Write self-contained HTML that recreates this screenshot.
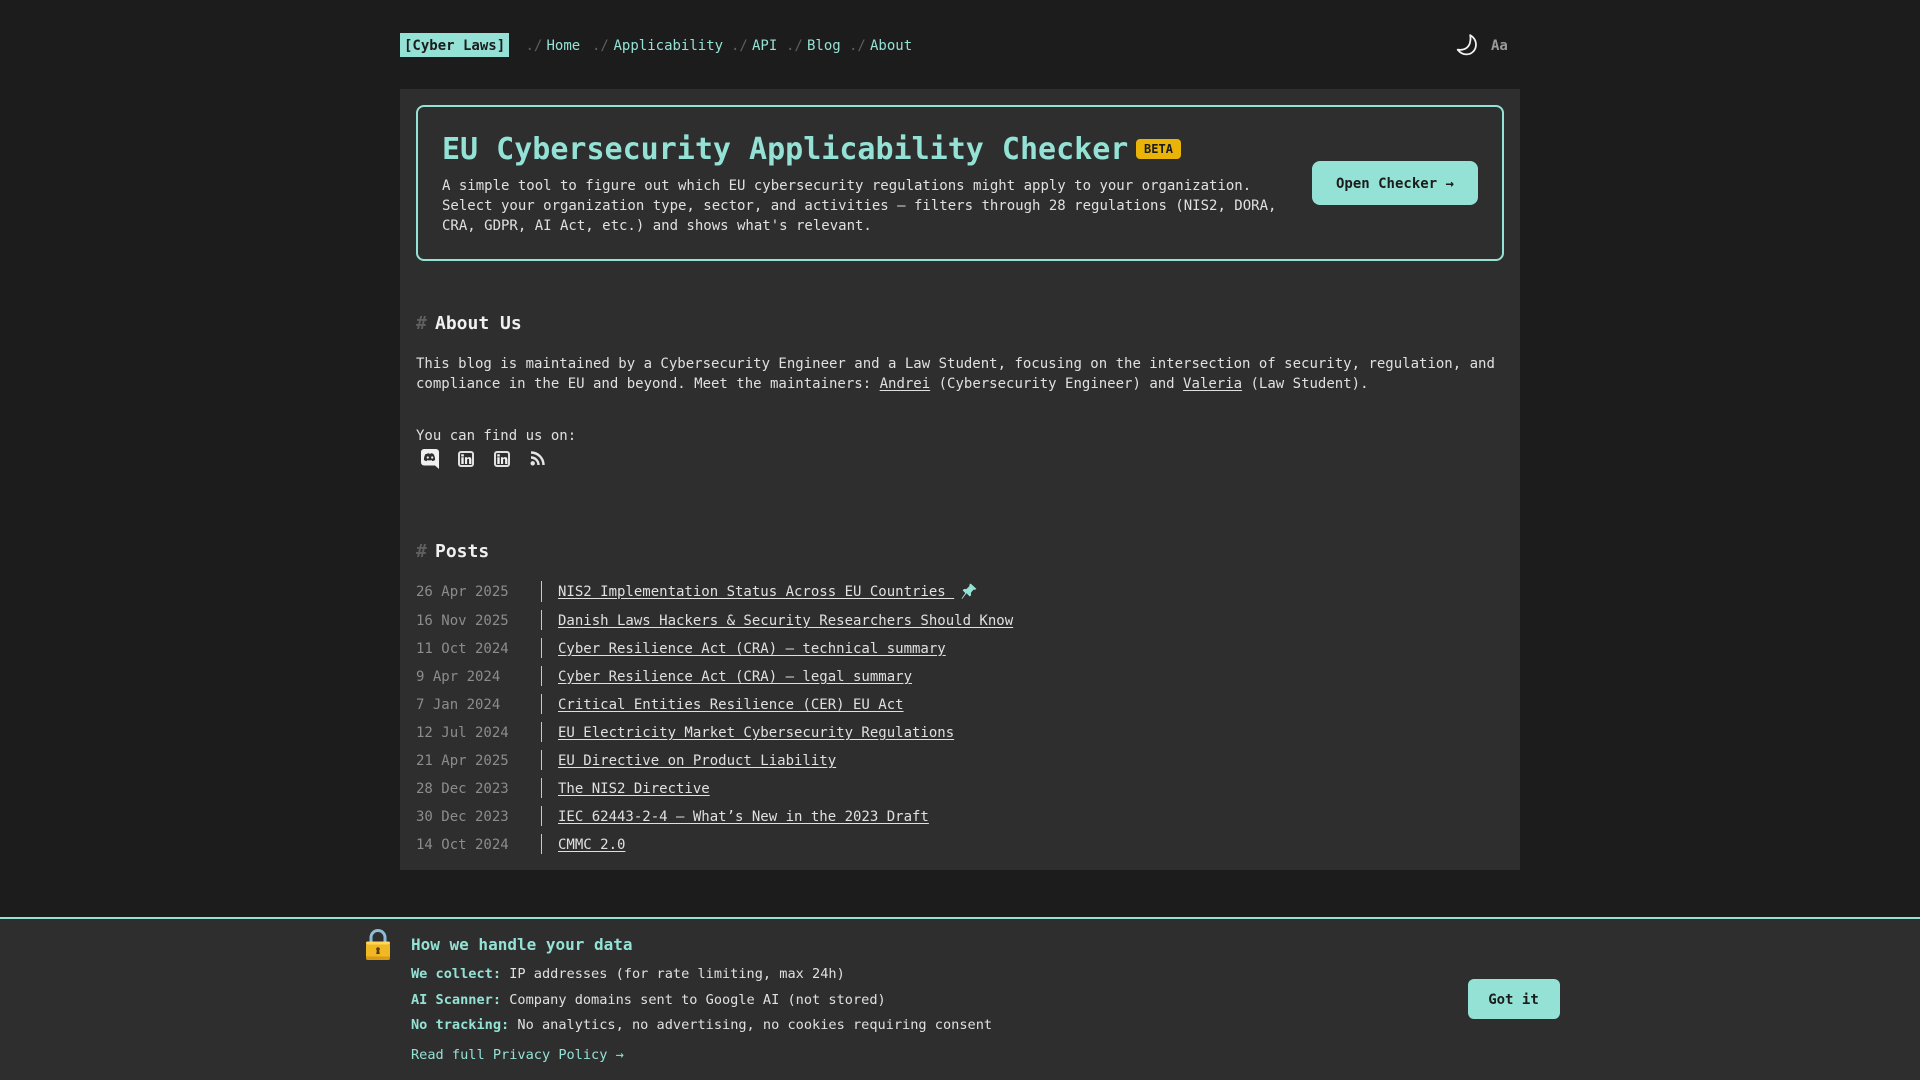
<!DOCTYPE html>
<html lang="en"><head><meta charset="utf-8"><title>Cyber Laws</title>
<style>
html,body{margin:0;padding:0;width:1920px;height:1080px;overflow:hidden;background:#1c1c1c}
body{position:relative;font-family:"DejaVu Sans Mono",monospace;font-size:14px;line-height:20px;color:#e0e0e0}
.t,.b{position:absolute;white-space:pre;line-height:20px}
.g{color:#5f5f5f}.c{color:#94e2d5}.d{color:#8c8c8c}
b,.bd{font-weight:700}
a{color:inherit;text-decoration:underline;text-underline-offset:2px}
.s{position:absolute;left:541px;width:1px;background:#94e2d5}
svg{position:absolute;display:block}
</style></head><body>
<div class="b" style="left:400px;top:33px;width:109px;height:24px;background:#94e2d5"></div>
<div class="t bd" style="left:404px;top:36px;color:#1c1c1c">[Cyber Laws]</div>
<div class="t g" style="left:525.500px;top:36px">./</div><div class="t c" style="left:546.500px;top:36px">Home</div>
<div class="t g" style="left:592px;top:36px">./</div><div class="t c" style="left:613.500px;top:36px">Applicability</div>
<div class="t g" style="left:731px;top:36px">./</div><div class="t c" style="left:752px;top:36px">API</div>
<div class="t g" style="left:786px;top:36px">./</div><div class="t c" style="left:807px;top:36px">Blog</div>
<div class="t g" style="left:849px;top:36px">./</div><div class="t c" style="left:870px;top:36px">About</div>
<svg style="left:1454px;top:33px" width="25" height="25" viewBox="0 0 24 24" fill="none" stroke="#f2f2f2" stroke-width="1.700" stroke-linejoin="round"><path d="M15.500 2c3.800 2.300 6 6 5.500 10.500-.5 4.600-4.500 8-9 8-3 0-6-1.300-8.500-4.500 5.500.8 9.500-1 11.500-5.500.9-3 1.200-5.700.5-8.500z"/></svg>
<div class="t bd" style="left:1491px;top:36px;font-size:14px;color:#9a9a9a">Aa</div>

<div class="b" style="left:400px;top:89px;width:1120px;height:781px;background:#2e2e2e"></div>
<div class="b" style="left:416px;top:105px;width:1084px;height:152px;border:2px solid #94e2d5;border-radius:8px"></div>
<div class="t bd c" style="left:442px;top:140px;font-size:30px;line-height:20px">EU Cybersecurity Applicability Checker</div>
<div class="b bd" style="left:1136px;top:139px;width:45px;height:20px;background:#eab308;border-radius:4px;color:#1c1c1c;font-size:12px;text-align:center">BETA</div>
<div class="t" style="left:442px;top:176px">A simple tool to figure out which EU cybersecurity regulations might apply to your organization.</div>
<div class="t" style="left:442px;top:196px">Select your organization type, sector, and activities — filters through 28 regulations (NIS2, DORA,</div>
<div class="t" style="left:442px;top:216px">CRA, GDPR, AI Act, etc.) and shows what's relevant.</div>
<div class="b bd" style="left:1312px;top:161px;width:166px;height:44px;line-height:46px;background:#94e2d5;border-radius:8px;color:#1c1c1c;text-align:center">Open Checker →</div>

<div class="t bd g" style="left:416px;top:314px;font-size:18px">#</div>
<div class="t bd" style="left:435px;top:314px;font-size:18px;color:#f0f0f0">About Us</div>
<div class="t" style="left:416px;top:354px">This blog is maintained by a Cybersecurity Engineer and a Law Student, focusing on the intersection of security, regulation, and</div>
<div class="t" style="left:416px;top:374px">compliance in the EU and beyond. Meet the maintainers: <a>Andrei</a> (Cybersecurity Engineer) and <a>Valeria</a> (Law Student).</div>
<div class="t" style="left:416px;top:426px">You can find us on:</div>

<svg style="left:421px;top:449px" width="18" height="20" viewBox="0 0 18 20"><path fill="#f0f0f0" d="M3 0h12a3 3 0 0 1 3 3v17l-4-3.500H3a3 3 0 0 1-3-3V3a3 3 0 0 1 3-3z"/><path fill="#2e2e2e" d="M5.500 5c1-.5 2-.7 2.500-.7l.3.500h1.400l.3-.5c.5 0 1.500.2 2.500.7 1.200 2 1.700 4 1.500 6-1 .7-2 1-2.700 1.100l-.6-1c-1.500.4-3 .4-4.400 0l-.6 1c-.7-.1-1.700-.4-2.700-1.100-.2-2 .3-4 1.500-6z"/><circle cx="6.800" cy="8.500" r="1.100" fill="#f0f0f0"/><circle cx="11.200" cy="8.500" r="1.100" fill="#f0f0f0"/></svg>
<svg style="left:458px;top:451px" width="16" height="16" viewBox="0 0 16 16"><rect x="1" y="1" width="14" height="14" rx="2" fill="none" stroke="#e0e0e0" stroke-width="2"/><path fill="#f0f0f0" d="M3.300 6.300h2.400v6.700H3.300zM3.200 3.300h2.600v2.200H3.200zM7 6.300h2.100v.9c.4-.7 1.100-1.100 2-1.100 1.700 0 2.300 1 2.300 2.600v4.300h-2.300V9c0-.8-.2-1.300-.9-1.300-.8 0-1.100.6-1.100 1.400V13H7z"/></svg>
<svg style="left:494px;top:451px" width="16" height="16" viewBox="0 0 16 16"><rect x="1" y="1" width="14" height="14" rx="2" fill="none" stroke="#e0e0e0" stroke-width="2"/><path fill="#f0f0f0" d="M3.300 6.300h2.400v6.700H3.300zM3.200 3.300h2.600v2.200H3.200zM7 6.300h2.100v.9c.4-.7 1.100-1.100 2-1.100 1.700 0 2.300 1 2.300 2.600v4.300h-2.300V9c0-.8-.2-1.300-.9-1.300-.8 0-1.100.6-1.100 1.400V13H7z"/></svg>
<svg style="left:530px;top:451px" width="15" height="15" viewBox="0 0 15 15" fill="none" stroke="#e6e6e6" stroke-width="2.400"><circle cx="2.700" cy="12.300" r="2.200" fill="#e6e6e6" stroke="none"/><path d="M1 6.500a7.500 7.500 0 0 1 7.500 7.500M1 1.500A12.500 12.500 0 0 1 13.500 14"/></svg>

<div class="t bd g" style="left:416px;top:542px;font-size:18px">#</div>
<div class="t bd" style="left:435px;top:542px;font-size:18px;color:#f0f0f0">Posts</div>

<div class="t d" style="left:416px;top:582px">26 Apr 2025</div><div class="s" style="top:581px;height:21px"></div><div class="t" style="left:558px;top:582px"><a>NIS2 Implementation Status Across EU Countries </a></div>
<svg style="left:961px;top:583px" width="16" height="17" viewBox="0 0 15 16"><path fill="#94e2d5" d="M9 .5l5.500 5-1.500 1-1.200-.3-2.500 3 .2 2.300-1.300 1.200-3-3L1 15l-.5-.5L4 9.500 1.500 6.800l1.300-1.200 2.300.1 2.800-2.800-.1-1.200z"/></svg>
<div class="t d" style="left:416px;top:611px">16 Nov 2025</div><div class="s" style="top:610px;height:20px"></div><div class="t" style="left:558px;top:611px"><a>Danish Laws Hackers &amp; Security Researchers Should Know</a></div>
<div class="t d" style="left:416px;top:639px">11 Oct 2024</div><div class="s" style="top:638px;height:20px"></div><div class="t" style="left:558px;top:639px"><a>Cyber Resilience Act (CRA) — technical summary</a></div>
<div class="t d" style="left:416px;top:667px">9 Apr 2024</div><div class="s" style="top:666px;height:20px"></div><div class="t" style="left:558px;top:667px"><a>Cyber Resilience Act (CRA) — legal summary</a></div>
<div class="t d" style="left:416px;top:695px">7 Jan 2024</div><div class="s" style="top:694px;height:20px"></div><div class="t" style="left:558px;top:695px"><a>Critical Entities Resilience (CER) EU Act</a></div>
<div class="t d" style="left:416px;top:723px">12 Jul 2024</div><div class="s" style="top:722px;height:20px"></div><div class="t" style="left:558px;top:723px"><a>EU Electricity Market Cybersecurity Regulations</a></div>
<div class="t d" style="left:416px;top:751px">21 Apr 2025</div><div class="s" style="top:750px;height:20px"></div><div class="t" style="left:558px;top:751px"><a>EU Directive on Product Liability</a></div>
<div class="t d" style="left:416px;top:779px">28 Dec 2023</div><div class="s" style="top:778px;height:20px"></div><div class="t" style="left:558px;top:779px"><a>The NIS2 Directive</a></div>
<div class="t d" style="left:416px;top:807px">30 Dec 2023</div><div class="s" style="top:806px;height:20px"></div><div class="t" style="left:558px;top:807px"><a>IEC 62443-2-4 — What’s New in the 2023 Draft</a></div>
<div class="t d" style="left:416px;top:835px">14 Oct 2024</div><div class="s" style="top:834px;height:20px"></div><div class="t" style="left:558px;top:835px"><a>CMMC 2.0</a></div>

<div class="b" style="left:0;top:917px;width:1920px;height:161px;border-top:2px solid #94e2d5;background:#2e2e2e"></div>
<svg style="left:363px;top:928px" width="30" height="33" viewBox="0 0 30 33"><path d="M8 15V9.500a7 7 0 0 1 14 0V15" fill="none" stroke="#8dbcd6" stroke-width="3"/><rect x="3" y="13.500" width="24" height="18.500" rx="4" fill="#f2b824"/><rect x="3" y="13.500" width="24" height="3" rx="1.500" fill="#ffd65a"/><rect x="3" y="28.500" width="24" height="3.500" rx="1.700" fill="#d99a16"/><circle cx="15" cy="21" r="1.800" fill="#5a3d18"/><path d="M14 21.500h2l.8 4.500h-3.600z" fill="#5a3d18"/></svg>
<div class="t bd c" style="left:411px;top:935px;font-size:16px">How we handle your data</div>
<div class="t" style="left:411px;top:964px;font-size:13.600px"><b class="c">We collect:</b> IP addresses (for rate limiting, max 24h)</div>
<div class="t" style="left:411px;top:990px;font-size:13.600px"><b class="c">AI Scanner:</b> Company domains sent to Google AI (not stored)</div>
<div class="t" style="left:411px;top:1015px;font-size:13.600px"><b class="c">No tracking:</b> No analytics, no advertising, no cookies requiring consent</div>
<div class="t c" style="left:411px;top:1045px;font-size:13.600px">Read full Privacy Policy →</div>
<div class="b bd" style="left:1468px;top:979px;width:92px;height:40px;line-height:42px;background:#94e2d5;border-radius:6px;color:#1c1c1c;text-align:center;text-indent:-1px">Got it</div>
</body></html>
